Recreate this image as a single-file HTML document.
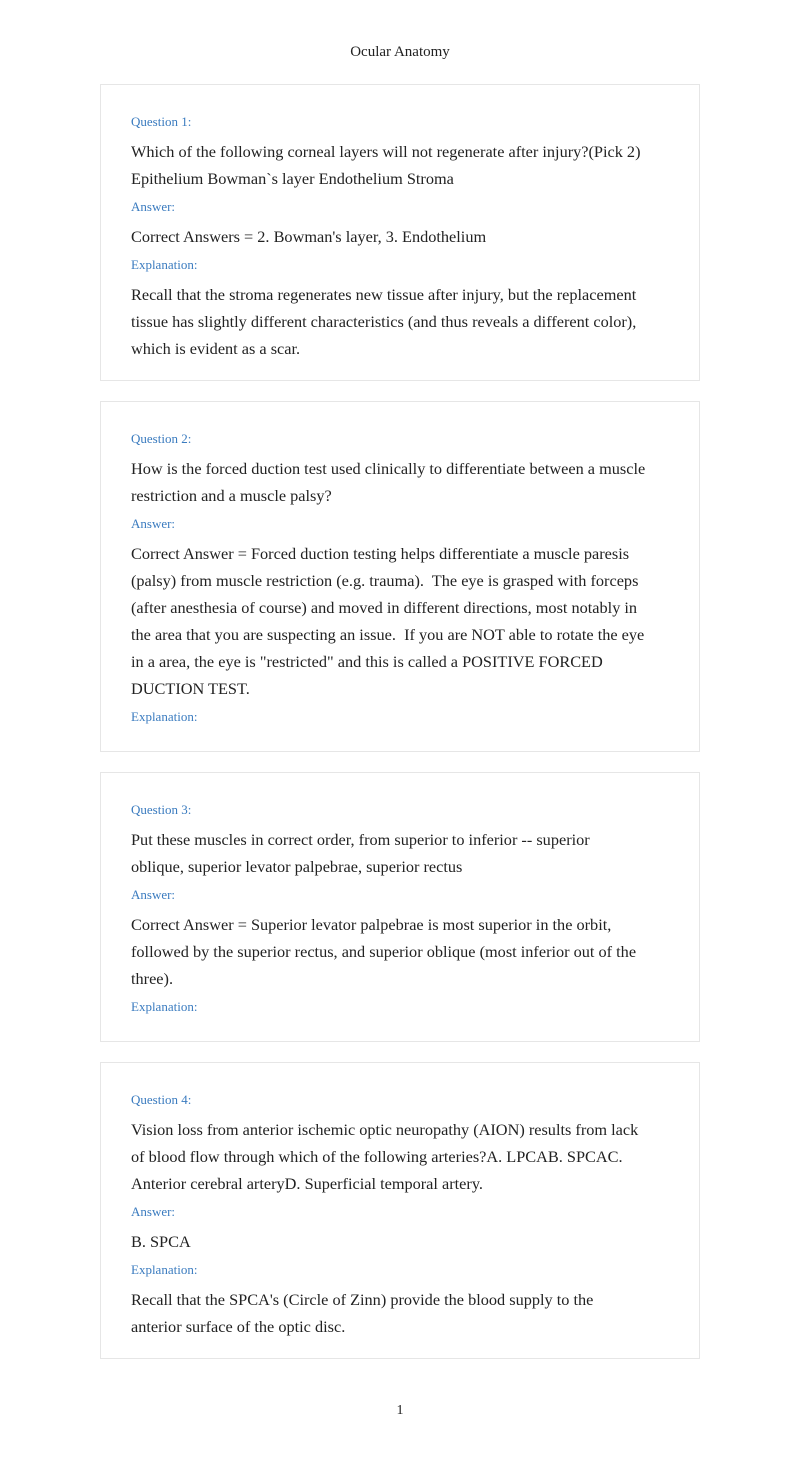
<!DOCTYPE html>
<html><head><meta charset="utf-8"><style>
body{margin:0;background:#fff;font-family:"Liberation Serif",serif;color:#222;}
.title{position:absolute;top:40px;left:0;width:800px;text-align:center;font-size:15px;line-height:24px;}
.card{position:absolute;left:100px;width:600px;border:1px solid #e6e6e6;padding:26px 30px 15px 30px;box-sizing:border-box;}
.lbl{color:#3a7bbf;font-size:13px;line-height:22px;}
.b{font-size:16.3px;line-height:27px;margin:5px 0 4px;white-space:nowrap;}
.pg{position:absolute;top:1400px;left:0;width:800px;text-align:center;font-size:14px;line-height:22px;}
</style></head><body>
<div class="title">Ocular Anatomy</div>
<div class="card" style="top:84px;height:297px">
<div class="lbl">Question 1:</div>
<div class="b">Which of the following corneal layers will not regenerate after injury?(Pick 2)<br>Epithelium Bowman`s layer Endothelium Stroma</div>
<div class="lbl">Answer:</div>
<div class="b">Correct Answers = 2. Bowman's layer, 3. Endothelium</div>
<div class="lbl">Explanation:</div>
<div class="b">Recall that the stroma regenerates new tissue after injury, but the replacement<br>tissue has slightly different characteristics (and thus reveals a different color),<br>which is evident as a scar.</div>
</div>
<div class="card" style="top:401px;height:351px">
<div class="lbl">Question 2:</div>
<div class="b">How is the forced duction test used clinically to differentiate between a muscle<br>restriction and a muscle palsy?</div>
<div class="lbl">Answer:</div>
<div class="b">Correct Answer = Forced duction testing helps differentiate a muscle paresis<br>(palsy) from muscle restriction (e.g. trauma).&nbsp; The eye is grasped with forceps<br>(after anesthesia of course) and moved in different directions, most notably in<br>the area that you are suspecting an issue.&nbsp; If you are NOT able to rotate the eye<br>in a area, the eye is "restricted" and this is called a POSITIVE FORCED<br>DUCTION TEST.</div>
<div class="lbl">Explanation:</div>
</div>
<div class="card" style="top:772px;height:270px">
<div class="lbl">Question 3:</div>
<div class="b">Put these muscles in correct order, from superior to inferior -- superior<br>oblique, superior levator palpebrae, superior rectus</div>
<div class="lbl">Answer:</div>
<div class="b">Correct Answer = Superior levator palpebrae is most superior in the orbit,<br>followed by the superior rectus, and superior oblique (most inferior out of the<br>three).</div>
<div class="lbl">Explanation:</div>
</div>
<div class="card" style="top:1062px;height:297px">
<div class="lbl">Question 4:</div>
<div class="b">Vision loss from anterior ischemic optic neuropathy (AION) results from lack<br>of blood flow through which of the following arteries?A. LPCAB. SPCAC.<br>Anterior cerebral arteryD. Superficial temporal artery.</div>
<div class="lbl">Answer:</div>
<div class="b">B. SPCA</div>
<div class="lbl">Explanation:</div>
<div class="b">Recall that the SPCA's (Circle of Zinn) provide the blood supply to the<br>anterior surface of the optic disc.</div>
</div>
<div class="pg">1</div>
</body></html>
